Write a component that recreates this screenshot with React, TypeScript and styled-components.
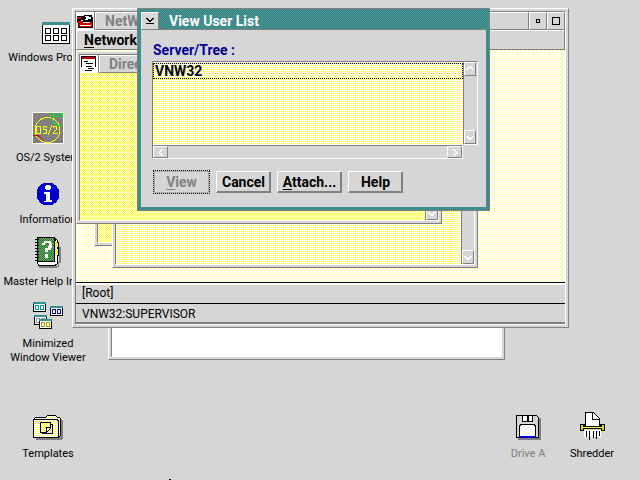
import React from "react";
import styled, { createGlobalStyle, css } from "styled-components";

const FACE = "#d6d6d6";
const SHADE = "#808080";
const LIGHT = "#ffffff";
const YELLOW = "#ffff00";
const NAVY = "#000099";

/* Builds an 8px vector tile from the given cells of a 4x4 matrix. */
const weave = (ink: string, paper: string, cells: number[][]) => {
  const path = [0, 4]
    .flatMap((dx) => [0, 4].flatMap((dy) => cells.map(([x, y]) => `M${x + dx} ${y + dy}h1v1h-1z`)))
    .join("");
  const svg = `<svg xmlns='http://www.w3.org/2000/svg' width='8' height='8' shape-rendering='crispEdges'><path fill='${paper}' d='M0 0h8v8H0z'/><path fill='${ink}' d='${path}'/></svg>`;
  return `url("data:image/svg+xml,${encodeURIComponent(svg).replace(/'/g, "%27")}")`;
};

const SPARSE = weave(YELLOW, "#ffffff", [[0, 0], [2, 2]]);
const MEDIUM = weave(YELLOW, "#ffffff", [[0, 0], [2, 0], [0, 2], [2, 2]]);
const DENSE = weave(YELLOW, "#ffffff", [
  [1, 0], [3, 0], [1, 2], [3, 2], [0, 1], [2, 1], [0, 3],
]);
const TEAL = weave("#009999", SHADE, [
  [0, 0], [2, 0], [1, 1], [3, 1], [0, 2], [2, 2], [1, 3], [3, 3],
]);

const GlobalStyle = createGlobalStyle`
  * { box-sizing: border-box; }
  body {
    margin: 0;
    background: ${FACE};
    font: 12px/14px Roboto, "Liberation Sans", sans-serif;
    color: #000;
    cursor: default;
  }
  button { font: inherit; color: inherit; border-radius: 0; }
  svg { display: block; shape-rendering: crispEdges; }
`;

const Desktop = styled.main`
  position: relative;
  height: 100vh;
  min-height: 480px;
  overflow: hidden;
`;

type Place = { $left?: number; $right?: number; $top?: number; $bottom?: number };
const placed = css<Place>`
  position: absolute;
  ${(p) => p.$left !== undefined && `left: ${p.$left}px;`}
  ${(p) => p.$right !== undefined && `right: ${p.$right}px;`}
  ${(p) => p.$top !== undefined && `top: ${p.$top}px;`}
  ${(p) => p.$bottom !== undefined && `bottom: ${p.$bottom}px;`}
`;

const Shortcut = styled.button<Place & { $dim?: boolean }>`
  ${placed}
  display: flex;
  flex-direction: column;
  align-items: center;
  gap: 7px;
  width: 96px;
  padding: 0;
  border: 0;
  background: none;
  text-align: center;
  color: ${(p) => (p.$dim ? SHADE : "#000")};
`;

const Caption = styled.span`
  font-size: 11px;
  line-height: 14px;
  white-space: pre;
`;

const Frame = styled.section<Place>`
  ${placed}
  display: flex;
  padding: 2px;
  background: ${FACE};
  border: 1px solid;
  border-color: ${LIGHT} ${SHADE} ${SHADE} ${LIGHT};
`;

const FrameBody = styled.div<{ $blank?: boolean }>`
  flex: 1;
  min-width: 0;
  display: flex;
  flex-direction: column;
  border: 1px solid;
  border-color: ${SHADE} ${LIGHT} ${LIGHT} ${SHADE};
  background: ${(p) => (p.$blank ? "#fff" : FACE)};
`;

const raised = css`
  border: 1px solid;
  border-color: ${LIGHT} ${SHADE} ${SHADE} ${LIGHT};
`;

const TitleBar = styled.header`
  display: flex;
  height: 18px;
  font-size: 14px;
  line-height: 18px;
  font-weight: 700;
`;

const TitleText = styled.h2`
  ${raised}
  flex: 1;
  min-width: 0;
  margin: 0;
  padding: 0 9px;
  font: inherit;
  line-height: 17px;
  color: ${SHADE};
  white-space: nowrap;
  overflow: hidden;
`;

const TitleButton = styled.button`
  ${raised}
  display: grid;
  place-items: center;
  width: 18px;
  height: 18px;
  padding: 0;
  background: ${FACE};
`;

const MenuBar = styled.nav`
  ${raised}
  display: flex;
  height: 20px;
  padding: 0 7px;
`;

const MenuItem = styled.button`
  padding: 0;
  border: 0;
  background: none;
  font-size: 14px;
  line-height: 16px;
  font-weight: 700;
`;

const Mnemonic = styled.u`
  text-underline-offset: 2px;
  text-decoration-thickness: 1px;
`;

const Workspace = styled.div`
  position: relative;
  flex: 1;
  min-height: 0;
  overflow: hidden;
  background: ${SPARSE};
`;

const StatusLine = styled.div<{ $last?: boolean }>`
  height: 21px;
  padding: 0 6px;
  border-top: 1px solid #000;
  line-height: 20px;
  ${(p) => (p.$last ? `border-bottom: 2px solid ${SHADE};` : `box-shadow: inset 0 2px ${LIGHT};`)}
`;

const Pane = styled.div`
  flex: 1;
  min-height: 0;
  display: flex;
`;

const Canvas = styled.div<{ $tone: "medium" | "dense" }>`
  flex: 1;
  background: ${(p) => (p.$tone === "dense" ? DENSE : `${MEDIUM} 1px 0`)};
`;

const Track = styled.div<{ $row?: boolean }>`
  display: flex;
  flex-direction: ${(p) => (p.$row ? "row" : "column")};
  justify-content: space-between;
  flex: none;
  ${(p) => (p.$row ? "height: 14px;" : "width: 13px;")}
  background: ${FACE};
  border: 0 solid ${SHADE};
  ${(p) => (p.$row ? "border-top-width: 1px;" : "border-left-width: 1px;")}
`;

const Arrow = styled.button<{ $row?: boolean }>`
  ${raised}
  display: grid;
  place-items: center;
  padding: 0;
  width: ${(p) => (p.$row ? "15px" : "12px")};
  height: ${(p) => (p.$row ? "12px" : "14px")};
  background: ${FACE};
`;

const chevrons = {
  up: "M1 5h2v-1h1v-1h2v1h1v1h2v-1h-1v-1h-1v-1h-1v-1h-2v1h-1v1h-1v1h-1z",
  down: "M1 3h2v1h1v1h2v-1h1v-1h2v1h-1v1h-1v1h-1v1h-2v-1h-1v-1h-1v-1h-1z",
  left: "M5 1h2v1h-1v1h-1v1h-1v1h1v1h1v1h1v1h-2v-1h-1v-1h-1v-1h-1v-1h1v-1h1v-1h1z",
  right: "M3 1h2v1h1v1h1v1h1v1h-1v1h-1v1h-1v1h-2v-1h1v-1h1v-1h1v-1h-1v-1h-1v-1h-1z",
};

function ScrollArrow({ to, row }: { to: keyof typeof chevrons; row?: boolean }) {
  return (
    <Arrow $row={row} aria-label={`Scroll ${to}`}>
      <svg width="10" height="9" viewBox="0 0 10 9">
        <path d={chevrons[to]} fill="#fff" />
      </svg>
    </Arrow>
  );
}

const Dialog = styled.section<Place>`
  ${placed}
  padding: 3px;
  border: 1px solid ${SHADE};
  background: ${TEAL};
`;

const DialogTitle = styled.h1`
  flex: 1;
  margin: 0;
  padding: 0 10px;
  font: inherit;
  color: #fff;
  border-bottom: 1px solid ${SHADE};
`;

const DialogBody = styled.div`
  padding: 13px 8px 13px 11px;
  background: ${FACE};
`;

const FieldLabel = styled.div`
  padding-left: 1px;
  margin-bottom: 3px;
  color: ${NAVY};
  font-size: 14px;
  line-height: 15px;
  font-weight: 700;
`;

const ListGrid = styled.div`
  display: grid;
  grid-template-columns: 1fr 15px;
  grid-template-rows: 84px 14px;
`;

const List = styled.ul`
  margin: 0;
  padding: 1px 0 0;
  list-style: none;
  border: 1px solid ${SHADE};
  border-width: 1px 0 0 1px;
  background: ${MEDIUM} 0 1px;
`;

const Option = styled.li`
  height: 16px;
  padding: 0 1px;
  border: 1px dotted #000;
  font-size: 14px;
  line-height: 15px;
  font-weight: 700;
`;

const SideTrack = styled(Track)`
  width: auto;
  border: 1px solid;
  border-color: ${SHADE} ${LIGHT} ${LIGHT} ${SHADE};
`;

const BottomTrack = styled(Track)`
  border: 1px solid;
  border-color: ${SHADE} ${LIGHT} ${LIGHT} ${SHADE};
`;

const Actions = styled.div`
  display: flex;
  align-items: center;
  gap: 6px;
  margin: 11px 0 0 1px;
`;

const Action = styled.button<{ $wide?: boolean }>`
  ${raised}
  min-width: ${(p) => (p.$wide ? 65 : 55)}px;
  height: 22px;
  padding: 0 3px;
  background: ${FACE};
  box-shadow: inset -1px -1px ${SHADE};
  font-size: 14px;
  line-height: 20px;
  font-weight: 700;
  white-space: nowrap;
  &:disabled {
    min-width: 57px;
    height: 24px;
    border: 1px dotted #000;
    box-shadow: inset 0 0 0 1px #aaa;
    color: ${SHADE};
  }
`;

const PointerTip = styled.svg`
  position: absolute;
  left: 169px;
  top: 479px;
`;

function ProgramsIcon() {
  return (
    <svg width="28" height="22" viewBox="0 0 28 22">
      <path d="M0 0h28v22h-28z" />
      <path d="M1 3h26v18h-26z" fill="#fff" />
      <path d="M0 0h28v3h-28z" fill="url(#cap)" />
      {[3, 11, 19].map((x) =>
        [6, 13].map((y) => <path key={`${x}-${y}`} d={`M${x + 0.5} ${y + 0.5}h5v5h-5z`} fill="#fff" stroke="#000" />)
      )}
      <defs>
        <pattern id="cap" width="2" height="2" patternUnits="userSpaceOnUse">
          <path d="M0 0h2v2h-2z" fill="#808080" />
          <path d="M1 0h1v1h-1zM0 1h1v1h-1z" fill="#009999" />
        </pattern>
      </defs>
    </svg>
  );
}

function SystemIcon() {
  return (
    <svg width="32" height="32" viewBox="0 0 32 32">
      <path d="M0 0h32v32h-32z" fill="#fff" />
      <path d="M1 1h30v30h-30z" fill="#808080" />
      <circle cx="15.5" cy="18" r="12.5" fill="none" stroke="#ff0" />
      <path d="M18.500 1v3M21.500 1v3h4v-3M31 1.500h-3v1h2v2h-2M19 6l2 4l4 3h5" fill="none" stroke="#0e2" />
      <path d="M1 23h4l3 2l4 4" fill="none" stroke="#d00" />
      <path
        d="M4.500 14.500h4v7h-4zM14.500 15.500v-1h-3v3h3v4h-3v-1M16.500 23l3-10M21.500 15.500v-1h3v3l-3 3v1h4"
        fill="none"
        stroke="#ff0"
      />
    </svg>
  );
}

function InfoIcon() {
  return (
    <svg width="24" height="24" viewBox="0 0 24 24">
      <circle cx="12" cy="12" r="11.5" fill="#0000cc" />
      <path d="M10 3h4v1h1v3h-1v1h-4v-1h-1v-3h1zM8 10h6v8h2v2h-8v-1h2v-7h-2z" fill="#fff" />
    </svg>
  );
}

function HelpIcon() {
  return (
    <svg width="26" height="31" viewBox="0 0 26 31">
      <defs>
        <pattern id="cover" width="2" height="2" patternUnits="userSpaceOnUse">
          <path d="M0 0h2v2h-2z" fill="#009000" />
          <path d="M1 0h1v1h-1zM0 1h1v1h-1z" fill="#909090" />
        </pattern>
      </defs>
      <path d="M4 29h19v-4h1v-15h2v16h-2v4h-2v1h-18z" fill="#808080" />
      <path d="M20.500 1.500l2 2v2h1v5h-1l1 2v5l-1 2v7l-2 1.500h-17l-1-2v-2h17z" fill="#fff" stroke="#000" />
      <path d="M20 4h2v2h1v4h-2v3h2v4h-2v2h-1z" fill="#ffee30" />
      <path d="M2.500 .5h17v24h-17z" fill="url(#cover)" stroke="#000" />
      <path d="M7 8h3v-2h4v3h-1v2h-3v4h3v-2h3v-2h1v-5h-1v-2h-7v2h-2zM10 17h3v4h-3z" fill="#fff" />
      {[2, 5, 8, 11, 14, 17, 20, 23].map((y) => (
        <path key={y} d={`M0 ${y}h4v1h-4z`} />
      ))}
    </svg>
  );
}

function MiniWindow({ x, y, tone }: { x: number; y: number; tone: string }) {
  return (
    <g transform={`translate(${x} ${y})`}>
      <path d="M0 0h13v10h-13z" />
      <path d="M1 2h11v7h-11z" fill="#fff" />
      <path d="M0 0h13v2h-13z" fill="#339090" />
      <path d="M2 3h4v5h-4zM7 3h4v5h-4z" fill={tone} />
      <path d="M3 4h2v3h-2zM8 4h2v3h-2z" fill="#fff" />
    </g>
  );
}

function ViewerIcon() {
  return (
    <svg width="30" height="28" viewBox="0 0 30 28">
      <MiniWindow x={0} y={0} tone="#00a0a0" />
      <MiniWindow x={17} y={4} tone="#0000aa" />
      <MiniWindow x={1} y={13} tone="#909090" />
      <MiniWindow x={6} y={17} tone="#a0a000" />
    </svg>
  );
}

function TemplatesIcon() {
  return (
    <svg width="30" height="25" viewBox="0 0 30 25">
      <defs>
        <pattern id="manila" width="2" height="2" patternUnits="userSpaceOnUse">
          <path d="M0 0h2v2h-2z" fill="#fff" />
          <path d="M0 0h1v1h-1z" fill="#ff0" />
        </pattern>
        <pattern id="sheet" width="2" height="2" patternUnits="userSpaceOnUse">
          <path d="M0 0h2v2h-2z" fill="#fff" />
          <path d="M0 0h1v1h-1zM1 1h1v1h-1z" fill="#ff0" />
        </pattern>
      </defs>
      <path d="M3 5h27v18l-2 2h-25z" fill="#808080" />
      <path d="M.5 22.5v-18l2-2h10l2-2h8l2 2h2l1 1v17l-2 2z" fill="url(#manila)" stroke="#000" />
      <path d="M1 4.500h23l1 1v15l1 1" fill="none" stroke="#000" />
      <path d="M9.500 9.500h10v9h-10z" fill="url(#sheet)" stroke="#000" />
      <path d="M7.500 7.500h10v6l-4 4h-6z" fill="url(#sheet)" stroke="#000" />
      <path d="M17.500 12.500h-4v5" fill="#fff" stroke="#000" />
    </svg>
  );
}

function FloppyIcon() {
  return (
    <svg width="25" height="25" viewBox="0 0 25 25">
      <path d="M2 3h23v22h-23z" fill="#808080" />
      <path d="M.5 .5h20l2 2v20h-22z" fill="#d6d6d6" stroke="#000" />
      <path d="M6 0h11v7h-11z" />
      <path d="M7 1h4v5h-4zM13 1h3v5h-3z" fill="#fff" />
      <path d="M3.500 22v-12h1v-1h14v1h1v12" fill="#fff" stroke="#000" />
      <path d="M4 21h15v2h-15z" fill="#0000dd" />
    </svg>
  );
}

function ShredderIcon() {
  return (
    <svg width="25" height="28" viewBox="0 0 25 28">
      <path d="M4 18h17v7h-17z" fill="#fff" />
      <path d="M.5 12.500h24v6h-3v-2h-18v2h-3z" fill="#d8d000" stroke="#000" />
      <path d="M3 13h19v2h-19z" />
      <path d="M5.500 14.500v-14h8l6 6v8z" fill="#fff" stroke="#000" />
      <path d="M12.500 .5v7h7" fill="none" stroke="#000" />
      <path d="M2 15h21v1h-21z" fill="#ffff40" />
      <path d="M6.500 19v6M9.500 19v9M13.500 19v7M16.500 19v8M19.500 19v5" stroke="#000" />
    </svg>
  );
}

function ToolboxIcon() {
  return (
    <svg width="18" height="18" viewBox="0 0 18 18">
      <path d="M1 4h7v-1h8v2h1v11h-15v-5h-1z" />
      <path d="M2 9h4v2h9v-2h1v6h-13v-4h-1z" fill="#e00000" />
      <path d="M9 4h4v1h2v2h-3v1h-3v-1h1v-2h-1zM7 10h7v1h-7zM4 13h11v1h-11z" fill="#fff" />
      <path d="M1 5h4v2h-4z" fill="#d00000" />
      <path d="M5 8h2v1h-2z" fill="#ff0" />
    </svg>
  );
}

function TreeIcon() {
  return (
    <svg width="18" height="18" viewBox="0 0 18 18">
      <path d="M1 1h15v2h-15zM1 3h1v9h-1zM15 3h1v9h-1z" />
      <path d="M2 2h13v2h-13z" fill="#d00000" />
      <path d="M4 6h4v1h-4zM6 8h7v1h-7zM6 11h6v1h-6zM8 13h6v1h-6zM5 15h7v1h-7z" />
      <path d="M4 8h1v1h-1zM6 13h1v1h-1z" fill="#ee0" />
    </svg>
  );
}

const Emblem = styled.span`
  flex: none;
  width: 19px;
  background: ${LIGHT};
  border-right: 1px solid ${SHADE};
`;

export default function App() {
  return (
    <Desktop>
      <GlobalStyle />

      <Shortcut $left={8} $top={22}>
        <ProgramsIcon />
        <Caption>Windows Programs</Caption>
      </Shortcut>
      <Shortcut $left={0} $top={112}>
        <SystemIcon />
        <Caption>OS/2 System</Caption>
      </Shortcut>
      <Shortcut $left={0} $top={182}>
        <InfoIcon />
        <Caption>Information</Caption>
      </Shortcut>
      <Shortcut $left={0} $top={237}>
        <HelpIcon />
        <Caption>Master Help Index</Caption>
      </Shortcut>
      <Shortcut $left={0} $top={302}>
        <ViewerIcon />
        <Caption>{"Minimized\nWindow Viewer"}</Caption>
      </Shortcut>
      <Shortcut $left={0} $top={415}>
        <TemplatesIcon />
        <Caption>Templates</Caption>
      </Shortcut>
      <Shortcut $right={64} $top={415} $dim>
        <FloppyIcon />
        <Caption>Drive A</Caption>
      </Shortcut>
      <Shortcut $right={0} $top={412}>
        <ShredderIcon />
        <Caption>Shredder</Caption>
      </Shortcut>

      <Frame $left={108} $right={135} $top={200} $bottom={120}>
        <FrameBody $blank />
      </Frame>

      <Frame $left={72} $right={71} $top={8} $bottom={152}>
        <FrameBody>
          <TitleBar>
            <Emblem>
              <ToolboxIcon />
            </Emblem>
            <TitleText>NetWare</TitleText>
            <TitleButton aria-label="Minimize">
              <svg width="4" height="4" viewBox="0 0 4 4">
                <path d="M.5 .5h3v3h-3z" fill="none" stroke="#000" />
              </svg>
            </TitleButton>
            <TitleButton aria-label="Maximize">
              <svg width="8" height="8" viewBox="0 0 8 8">
                <path d="M.5 .5h7v7h-7z" fill="none" stroke="#000" />
              </svg>
            </TitleButton>
          </TitleBar>
          <MenuBar>
            <MenuItem>
              <Mnemonic>N</Mnemonic>etwork
            </MenuItem>
          </MenuBar>
          <Workspace>
            <Frame $left={18} $right={100} $top={21} $bottom={36}>
              <FrameBody>
                <Pane>
                  <Canvas $tone="dense" />
                </Pane>
              </FrameBody>
            </Frame>
            <Frame $left={36} $right={87} $top={41} $bottom={14}>
              <FrameBody>
                <Pane>
                  <Canvas $tone="medium" />
                  <Track>
                    <ScrollArrow to="up" />
                    <ScrollArrow to="down" />
                  </Track>
                </Pane>
              </FrameBody>
            </Frame>
            <Frame $left={0} $right={123} $top={1} $bottom={58}>
              <FrameBody>
                <TitleBar>
                  <Emblem>
                    <TreeIcon />
                  </Emblem>
                  <TitleText>Direct</TitleText>
                </TitleBar>
                <Pane>
                  <Canvas $tone="dense" />
                  <Track>
                    <ScrollArrow to="up" />
                    <ScrollArrow to="down" />
                  </Track>
                </Pane>
              </FrameBody>
            </Frame>
          </Workspace>
          <StatusLine>[Root]</StatusLine>
          <StatusLine $last>VNW32:SUPERVISOR</StatusLine>
        </FrameBody>
      </Frame>

      <Dialog $left={137} $right={150} $top={8} role="dialog" aria-labelledby="dialog-title">
        <TitleBar>
          <TitleButton aria-label="System menu">
            <svg width="8" height="7" viewBox="0 0 8 7">
              <path d="M0 0h2v1h1v1h2v-1h1v-1h2v1h-1v1h-1v1h-1v1h-2v-1h-1v-1h-1v-1h-1zM0 5h8v1h-8z" />
            </svg>
          </TitleButton>
          <DialogTitle id="dialog-title">View User List</DialogTitle>
        </TitleBar>
        <DialogBody>
          <FieldLabel id="server-label">Server/Tree :</FieldLabel>
          <ListGrid>
            <List role="listbox" aria-labelledby="server-label">
              <Option role="option" aria-selected="true">
                VNW32
              </Option>
            </List>
            <SideTrack>
              <ScrollArrow to="up" />
              <ScrollArrow to="down" />
            </SideTrack>
            <BottomTrack $row>
              <ScrollArrow to="left" row />
              <ScrollArrow to="right" row />
            </BottomTrack>
          </ListGrid>
          <Actions>
            <Action disabled>
              <Mnemonic>V</Mnemonic>iew
            </Action>
            <Action>Cancel</Action>
            <Action $wide>
              <Mnemonic>A</Mnemonic>ttach...
            </Action>
            <Action>Help</Action>
          </Actions>
        </DialogBody>
      </Dialog>

      <PointerTip width="2" height="1" viewBox="0 0 2 1">
        <path d="M0 0h2v1h-2z" />
      </PointerTip>
    </Desktop>
  );
}
